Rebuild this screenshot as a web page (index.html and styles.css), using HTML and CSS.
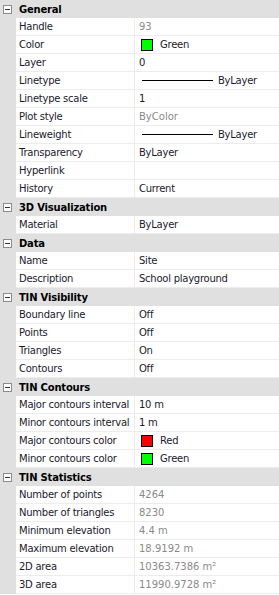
FILE: index.html
```html
<!DOCTYPE html>
<html lang="en">
<head>
  <meta charset="UTF-8">
  <title>Properties</title>
  <link rel="stylesheet" href="styles.css">
</head>
<body>
  <div class="props">
    <!-- General -->
    <div class="cat"><span class="toggle"></span><span class="cat-name">General</span></div>
    <div class="row"><span class="gut"></span><span class="label">Handle</span><span class="value dim">93</span></div>
    <div class="row"><span class="gut"></span><span class="label">Color</span><span class="value"><i class="swatch green"></i>Green</span></div>
    <div class="row"><span class="gut"></span><span class="label">Layer</span><span class="value">0</span></div>
    <div class="row"><span class="gut"></span><span class="label">Linetype</span><span class="value"><i class="ltype"></i>ByLayer</span></div>
    <div class="row"><span class="gut"></span><span class="label">Linetype scale</span><span class="value">1</span></div>
    <div class="row"><span class="gut"></span><span class="label">Plot style</span><span class="value dim">ByColor</span></div>
    <div class="row"><span class="gut"></span><span class="label">Lineweight</span><span class="value"><i class="ltype"></i>ByLayer</span></div>
    <div class="row"><span class="gut"></span><span class="label">Transparency</span><span class="value">ByLayer</span></div>
    <div class="row"><span class="gut"></span><span class="label">Hyperlink</span><span class="value"></span></div>
    <div class="row"><span class="gut"></span><span class="label">History</span><span class="value">Current</span></div>

    <!-- 3D Visualization -->
    <div class="cat"><span class="toggle"></span><span class="cat-name">3D Visualization</span></div>
    <div class="row"><span class="gut"></span><span class="label">Material</span><span class="value">ByLayer</span></div>

    <!-- Data -->
    <div class="cat"><span class="toggle"></span><span class="cat-name">Data</span></div>
    <div class="row"><span class="gut"></span><span class="label">Name</span><span class="value">Site</span></div>
    <div class="row"><span class="gut"></span><span class="label">Description</span><span class="value">School playground</span></div>

    <!-- TIN Visibility -->
    <div class="cat"><span class="toggle"></span><span class="cat-name">TIN Visibility</span></div>
    <div class="row"><span class="gut"></span><span class="label">Boundary line</span><span class="value">Off</span></div>
    <div class="row"><span class="gut"></span><span class="label">Points</span><span class="value">Off</span></div>
    <div class="row"><span class="gut"></span><span class="label">Triangles</span><span class="value">On</span></div>
    <div class="row"><span class="gut"></span><span class="label">Contours</span><span class="value">Off</span></div>

    <!-- TIN Contours -->
    <div class="cat"><span class="toggle"></span><span class="cat-name">TIN Contours</span></div>
    <div class="row"><span class="gut"></span><span class="label">Major contours interval</span><span class="value">10 m</span></div>
    <div class="row"><span class="gut"></span><span class="label">Minor contours interval</span><span class="value">1 m</span></div>
    <div class="row"><span class="gut"></span><span class="label">Major contours color</span><span class="value"><i class="swatch red"></i>Red</span></div>
    <div class="row"><span class="gut"></span><span class="label">Minor contours color</span><span class="value"><i class="swatch green"></i>Green</span></div>

    <!-- TIN Statistics -->
    <div class="cat"><span class="toggle"></span><span class="cat-name">TIN Statistics</span></div>
    <div class="row"><span class="gut"></span><span class="label">Number of points</span><span class="value dim">4264</span></div>
    <div class="row"><span class="gut"></span><span class="label">Number of triangles</span><span class="value dim">8230</span></div>
    <div class="row"><span class="gut"></span><span class="label">Minimum elevation</span><span class="value dim">4.4 m</span></div>
    <div class="row"><span class="gut"></span><span class="label">Maximum elevation</span><span class="value dim">18.9192 m</span></div>
    <div class="row"><span class="gut"></span><span class="label">2D area</span><span class="value dim">10363.7386 m²</span></div>
    <div class="row"><span class="gut"></span><span class="label">3D area</span><span class="value dim">11990.9728 m²</span></div>
  </div>
</body>
</html>
```

FILE: styles.css
```css
/* General styles */
body {
  margin: 0;
  background-color: #fff;
  font-family: "DejaVu Sans", Tahoma, sans-serif;
  font-size: 10px;
  letter-spacing: -0.25px;
  color: #1a1a2e;
}

.props {
  width: 279px;
}

/* Category header */
.cat {
  display: flex;
  align-items: center;
  height: 18px;
  background-color: #e0e0e0;
}

.toggle {
  box-sizing: border-box;
  width: 9px;
  height: 9px;
  margin: 0 4px 0 3px;
  border: 1px solid #8c8c8c;
  background-color: #fff;
  position: relative;
}

.toggle::after {
  content: "";
  position: absolute;
  left: 1px;
  top: 3px;
  width: 5px;
  height: 1px;
  background-color: #333;
}

.cat-name {
  padding-left: 3px;
  font-weight: bold;
  font-size: 10px;
  letter-spacing: -0.2px;
  color: #000;
}

/* Property rows */
.row {
  display: grid;
  grid-template-columns: 16px 119px 1fr;
  height: 18px;
}

.gut {
  background-color: #e0e0e0;
}

.label,
.value {
  display: flex;
  align-items: center;
  white-space: nowrap;
  overflow: hidden;
  border-bottom: 1px solid #ececec;
}

.label {
  padding-left: 3px;
  border-right: 1px solid #ececec;
}

.value {
  padding-left: 4px;
}

.dim {
  color: #8a8a8a;
  letter-spacing: 0;
}

.swatch {
  box-sizing: border-box;
  width: 12px;
  height: 12px;
  margin: 0 7px 0 2px;
  border: 1px solid #000;
}

.swatch.green {
  background-color: #00ff00;
}

.swatch.red {
  background-color: #ff0000;
}

.ltype {
  width: 71px;
  height: 1px;
  margin: 0 5px 0 3px;
  background-color: #000;
}
```
